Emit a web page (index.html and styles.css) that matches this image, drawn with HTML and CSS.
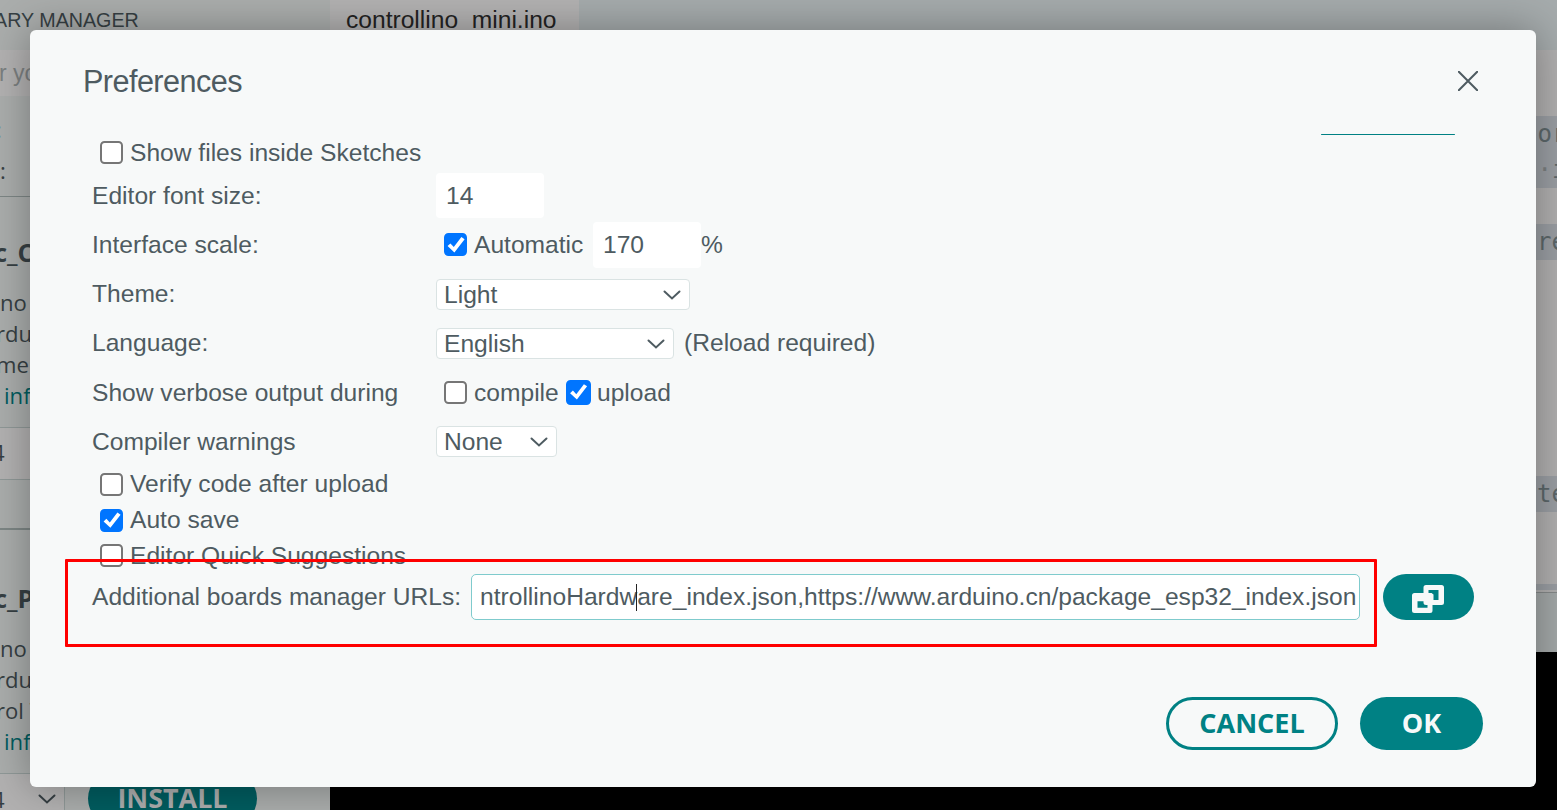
FILE: index.html
```html
<!DOCTYPE html>
<html lang="en">
<head>
<meta charset="utf-8">
<title>Preferences</title>
<link rel="stylesheet" href="styles.css">
</head>
<body>
<div class="app">
  <aside class="sidebar">
    <div class="side-title">ARY MANAGER</div>
    <div class="search">r yo</div>
    <div class="filters"><div class="blue">:</div><div>:</div></div>
    <section class="lib first">
      <h3>c_C</h3>
      <p><span class="s1">no</span><span class="s2">rdu</span><span class="s3">me</span><a class="s4">inf</a></p>
      <div class="version">4</div>
    </section>
    <section class="lib second">
      <h3>c_P</h3>
      <p><span class="s1">no</span><span class="s2">rdu</span><span class="s5">rol T</span><a class="s4">inf</a></p>
      <div class="install-row">
        <div class="version-select">4<svg width="18" height="12" viewBox="0 0 18 12"><path d="M1.5 2.5 9 9.5 16.5 2.5"/></svg></div>
        <button class="install">INSTALL</button>
      </div>
    </section>
  </aside>
  <main class="editor">
    <div class="tabs"><div class="tab">controllino_mini.ino</div></div>
    <div class="code">
      <div class="line l1">for</div>
      <div class="line l2">(<i>·</i>i</div>
      <div class="line l3">re</div>
      <div class="line l4">te</div>
      <div class="line l5"></div>
    </div>
    <div class="panel"></div>
    <div class="terminal"></div>
  </main>
</div>

<div class="dialog">
  <header class="head">
    <h1>Preferences</h1>
    <svg class="close" width="20" height="20" viewBox="0 0 20 20"><path d="M.8.8 19.2 19.2M19.2.8.8 19.2"/></svg>
  </header>
  <div class="body">
    <div class="browse-edge"></div>
    <label class="check c1"><input type="checkbox">Show files inside Sketches</label>
    <div class="row"><span class="name">Editor font size:</span><span class="num">14</span></div>
    <div class="row"><span class="name">Interface scale:</span><label class="opt"><input type="checkbox" checked>Automatic</label><span class="num scale">170</span>%</div>
    <div class="row"><span class="name">Theme:</span><span class="select theme">Light<svg width="18" height="12" viewBox="0 0 18 12"><path d="M1.5 2.5 9 9.5 16.5 2.5"/></svg></span></div>
    <div class="row"><span class="name">Language:</span><span class="select lang">English<svg width="18" height="12" viewBox="0 0 18 12"><path d="M1.5 2.5 9 9.5 16.5 2.5"/></svg></span><span class="note">(Reload required)</span></div>
    <div class="row verbose"><span class="name">Show verbose output during</span><label class="opt compile"><input type="checkbox">compile</label><label class="opt upload"><input type="checkbox" checked>upload</label></div>
    <div class="row"><span class="name">Compiler warnings</span><span class="select warn">None<svg width="18" height="12" viewBox="0 0 18 12"><path d="M1.5 2.5 9 9.5 16.5 2.5"/></svg></span></div>
    <label class="check"><input type="checkbox">Verify code after upload</label>
    <label class="check"><input type="checkbox" checked>Auto save</label>
    <label class="check c1"><input type="checkbox">Editor Quick Suggestions</label>
    <div class="row urls">
      <span class="url-name">Additional boards manager URLs:</span>
      <span class="url">ntrollinoHardware_index.json,https://www.arduino.cn/package_esp32_index.json<i class="caret"></i></span>
      <button class="open"><svg width="34" height="30" viewBox="0 0 34 30"><path class="frame" fill-rule="evenodd" d="M15 1h15.500a2.500 2.500 0 0 1 2.500 2.500v15a2.500 2.500 0 0 1-2.500 2.500H15a2.500 2.500 0 0 1-2.500-2.500v-15A2.500 2.500 0 0 1 15 1ZM17.500 6h10v10h-5v-5.500l-2-1.500h-3Z"/><path class="frame" fill-rule="evenodd" d="M3.500 9H19a2.500 2.500 0 0 1 2.500 2.500V26.500a2.500 2.500 0 0 1-2.500 2.500H3.500A2.500 2.500 0 0 1 1 26.500V11.500A2.500 2.500 0 0 1 3.500 9ZM6.500 17.200v6.500h10v-6.500Z"/></svg></button>
      <div class="highlight"></div>
    </div>
  </div>
  <footer class="foot"><button class="cancel">CANCEL</button><button class="ok">OK</button></footer>
</div>
</body>
</html>
```
FILE: styles.css
```css
* { box-sizing: border-box; }
body { margin: 0; width: 1557px; height: 810px; overflow: hidden; position: relative; font-family: "Liberation Sans", Arial, sans-serif; color: #4e5b61; }
h1, h3, p { margin: 0; font-weight: normal; }
button { border: 0; padding: 0; font-family: "Open Sans", sans-serif; font-weight: 700; }
svg path { fill: none; stroke: #4e5b61; stroke-width: 2; stroke-linecap: round; }

.app { display: flex; height: 810px; overflow: hidden; }
.sidebar { width: 330px; flex: none; background: #aaadac; color: #363f43; font-family: "Open Sans", sans-serif; font-size: 22.1px; overflow: hidden; white-space: nowrap; }
.side-title { height: 50px; font: 19.7px/40px "Liberation Sans", sans-serif; margin-left: -6px; }
.search { height: 46px; background: #b2b1b1; font: 23px/46px "Liberation Sans", sans-serif; color: #7b7f80; text-indent: -1px; }
.filters { height: 101px; border-bottom: 1px solid #7d8685; padding-top: 13px; line-height: 41px; text-indent: 0; }
.filters .blue { color: #5881a4; text-indent: -4px; }
.lib { height: 333px; border-bottom: 2px solid #7d8685; }
.lib.second { padding-top: 13px; }
.lib h3 { font-size: 25.5px; font-weight: 700; line-height: 32px; padding-top: 39px; margin-bottom: 19px; margin-left: -6px; }
.lib p { line-height: 31px; height: 140px; }
.lib p span, .lib p a { display: block; }
.s1 { margin-left: 0; }
.s2 { margin-left: -4px; }
.s3 { margin-left: -4px; }
.s5 { margin-left: -4px; }
.s4 { margin-left: 4px; color: #005c5f; }
.version { height: 53px; border: solid #8f9897; border-width: 1px 0; background: #b2b1b1; line-height: 48px; text-indent: -8px; }
.install-row { display: flex; height: 53px; border-top: 1px solid #8f9897; }
.version-select { width: 65px; background: #b2b1b1; border-right: 1px solid #8f9897; line-height: 48px; text-indent: -8px; display: flex; align-items: center; justify-content: space-between; padding: 0 8px 2px 0; }
.version-select svg path { stroke: #363f43; }
.install { width: 169px; height: 53px; margin: -2px 0 0 23px; border-radius: 27px; background: #005c5f; color: #acadad; font-size: 26.9px; line-height: 51px; padding-bottom: 2px; }

.editor { flex: 1; display: flex; flex-direction: column; background: #b0afaf; }
.tabs { height: 50px; flex: none; background: #a5abac; display: flex; }
.tab { width: 249px; background: #b2b1b1; color: #222; font-size: 24.6px; line-height: 40px; padding-left: 16px; }
.code { height: 542px; flex: none; padding-top: 66px; font: 24px/36px "DejaVu Sans Mono", monospace; color: #5c676a; }
.line { height: 36px; background: #9a9ea3; padding-left: 1207px; white-space: nowrap; overflow: hidden; }
.l1 { padding-left: 1193px; }
.l2 { padding-left: 1193px; }
.line i { font-style: normal; color: #7b7f80; }
.l3 { margin-top: 36px; }
.l4 { margin-top: 216px; }
.l5 { margin-top: 72px; height: 6px; }
.panel { height: 60px; flex: none; background: #a3a8a8; border-top: 1px solid #858989; }
.terminal { flex: 1; background: #000; }

.dialog { position: absolute; left: 30px; top: 30px; width: 1506px; height: 757px; border-radius: 6px; background: #f7f9f9; box-shadow: 0 0 42px rgba(0,0,0,.32); display: flex; flex-direction: column; font-size: 24.6px; white-space: nowrap; }
.head { height: 104px; flex: none; display: flex; justify-content: space-between; align-items: center; padding: 0 58px 2px 53px; }
.head h1 { font-size: 30.6px; letter-spacing: -.55px; padding-top: 1px; }
.body { height: 513px; position: relative; padding-left: 62px; }
.browse-edge { width: 134px; height: 1px; background: #008184; border-radius: 1px; margin-left: 1229px; }
input { appearance: none; flex: none; width: 23px; height: 23px; margin: 0 7px 0 8px; border: 2px solid #767676; border-radius: 4.5px; background: #fff; display: grid; place-items: center; }
input:checked { border-color: #0075ff; background: #0075ff; }
input:checked::before { content: ""; width: 20px; height: 20px; background: #fff; clip-path: polygon(8% 54%, 22% 41%, 39% 59%, 77% 9%, 93% 20%, 42% 86%); }
.check { display: flex; align-items: center; height: 36px; }
.c1 input { margin-top: -2px; }
.row { display: flex; align-items: center; height: 49.2px; }
.verbose .name, .verbose .opt { padding-top: 1px; }
.verbose input { margin-top: -1px; }
.name { width: 344px; flex: none; }
.num { width: 108px; height: 45px; background: #fff; border-radius: 4px; padding-left: 10px; line-height: 45px; }
.opt { display: flex; align-items: center; }
.compile { width: 123px; }
.scale { height: 46px; }
.opt:has(+ .scale) { width: 157px; }
.upload input { width: 25px; height: 25px; margin: -1px 6px 0 7px; }
.select { height: 31px; background: #fff; border: 1px solid #dae3e3; border-radius: 4px; display: flex; align-items: center; justify-content: space-between; padding: 1px 8px 0 7px; }
.theme { width: 254px; margin-top: 1px; }
.lang { width: 238px; }
.warn { width: 121px; }
.note { margin-left: 10px; }
.urls { position: relative; height: 46px; }
.url-name { width: 379px; flex: none; }
.url { position: relative; width: 889px; height: 46px; background: #fff; border: 1px solid #7fcbcd; border-radius: 5px; line-height: 44px; padding-left: 8px; flex: none; }
.caret { position: absolute; left: 164px; top: 9px; width: 1px; height: 27px; background: #222; }
.open { width: 91px; height: 46px; border-radius: 23px; background: #008184; margin-left: 23px; display: flex; align-items: center; justify-content: center; padding-top: 3px; flex: none; }
.open svg { margin-left: -1px; }
.open .frame { fill: #f7f9f9; stroke: none; }
.highlight { position: absolute; left: -27px; top: -15px; width: 1312px; height: 88px; border: 3px solid #f00; border-radius: 1px; }
.foot { display: flex; justify-content: flex-end; gap: 22px; padding: 50px 53px 0 0; }
.foot button { height: 53px; border-radius: 27px; font-size: 27px; padding-bottom: 2px; }
.foot .cancel { width: 172px; border: 3px solid #008184; background: #f7f9f9; color: #008184; }
.foot .ok { width: 123px; background: #008184; color: #f7f9f9; }
```
